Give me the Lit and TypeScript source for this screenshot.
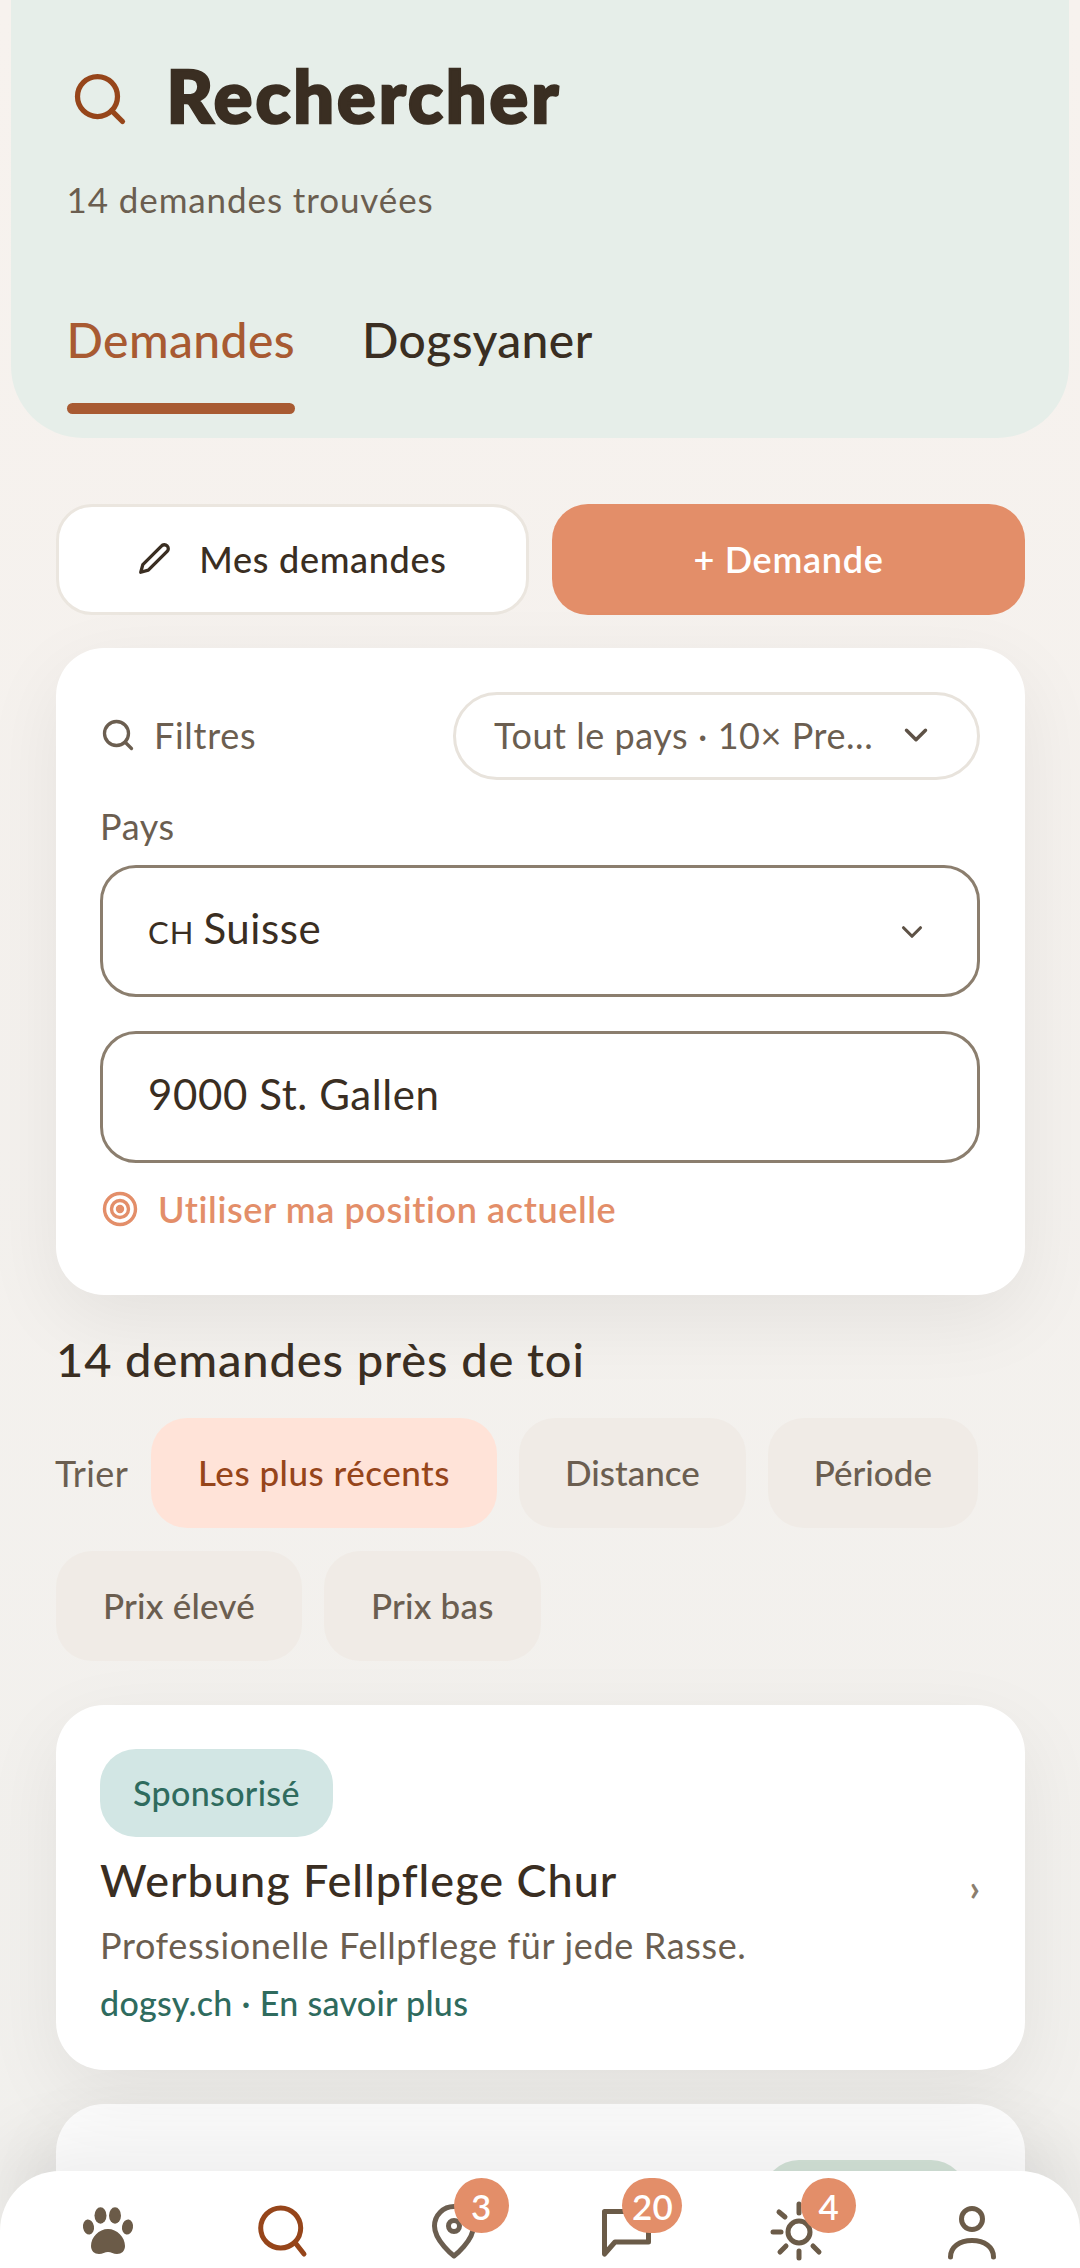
import { LitElement, html, css } from "lit";
import { customElement } from "lit/decorators.js";

const searchIcon = (size: number, color: string, sw = 2.1) => html`<svg width=${size} height=${size} viewBox="0 0 24 24" fill="none" stroke=${color} stroke-width=${sw} stroke-linecap="round" stroke-linejoin="round"><circle cx="11" cy="11" r="8"></circle><line x1="21" y1="21" x2="16.65" y2="16.65"></line></svg>`;
const chevron = (size: number, color: string) => html`<svg width=${size} height=${size} viewBox="0 0 24 24" fill="none" stroke=${color} stroke-width="2.2" stroke-linecap="round" stroke-linejoin="round"><path d="M6 9l6 6 6-6"></path></svg>`;

@customElement("app-root")
export class AppRoot extends LitElement {
  static styles = css`
    :host { display: block; position: relative; width: 1080px; height: 2268px; overflow: hidden; background: linear-gradient(#f7f2ee, #f1f0ed); font-family: "Lato", "Noto Sans", sans-serif; color: #3a2e22; }
    * { box-sizing: border-box; }
    .header { margin: 0 11px; height: 438px; background: #e6eee9; border-radius: 0 0 72px 72px; padding: 66px 56px 0 55.5px; display: flex; flex-direction: column; }
    .title-row { display: flex; align-items: center; gap: 37px; height: 66px; margin-left: 3px; }
    .title { font-size: 72px; font-weight: 900; line-height: 58px; padding-bottom: 8px; color: #3a2e22; letter-spacing: 3px; -webkit-text-stroke: 2.5px #3a2e22; }
    .sub { margin-top: 45px; font-size: 35px; line-height: 44px; color: #6b5e50; letter-spacing: 0.9px; }
    .tabs { margin-top: 89px; display: flex; gap: 67px; font-size: 48px; line-height: 60px; font-weight: 500; letter-spacing: 0.4px; }
    .tab { display: flex; flex-direction: column; }
    .tab.active { color: #a85a32; }
    .tab.active::after { content: ""; height: 11px; margin-top: 33px; border-radius: 6px; background: #a85a32; }
    .content { padding: 66px 55px 0 56px; display: flex; flex-direction: column; }
    .actions { display: grid; grid-template-columns: 1fr 1fr; gap: 23px; }
    .btn { height: 111px; padding-bottom: 2px; border-radius: 36px; display: flex; align-items: center; justify-content: center; font-size: 36px; font-weight: 500; letter-spacing: 0.7px; }
    .btn.ghost { background: #fff; border: 3px solid #ebe6df; gap: 28px; color: #3a2e22; }
    .btn.primary { background: #e38e69; color: #fff; font-weight: 600; }
    .card { background: #fff; border-radius: 48px; box-shadow: 0 24px 80px rgba(0, 0, 0, 0.065); }
    .filters { margin-top: 33px; height: 647px; padding: 44px 45px 0 44px; display: flex; flex-direction: column; }
    .f-top { display: flex; justify-content: space-between; align-items: center; height: 88px; }
    .f-label { display: flex; align-items: center; gap: 18px; font-size: 36px; color: #6b5e50; letter-spacing: 0.7px; padding-bottom: 2px; }
    .pill { width: 527px; height: 88px; border-radius: 44px; border: 3px solid #e8e3dc; display: flex; align-items: center; justify-content: space-between; padding: 0 42px 2px 38px; font-size: 36px; color: #6b5e50; letter-spacing: 0.55px; }
    .pays { margin-top: 24px; font-size: 36px; line-height: 44px; color: #6b5e50; letter-spacing: 0.6px; }
    .field { height: 132px; margin-top: 17px; border: 3px solid #8b7e6e; border-radius: 36px; padding: 0 48px 6px 45px; display: flex; align-items: center; justify-content: space-between; font-size: 42px; color: #3a2e22; letter-spacing: 0.6px; }
    .field + .field { margin-top: 34px; }
    .field svg { margin-top: 7px; }
    .cc { font-size: 31px; letter-spacing: 1px; margin-right: 9px; }
    .locate { margin-top: 24px; display: flex; align-items: center; gap: 20px; font-size: 36px; font-weight: 600; color: #e38e69; line-height: 44px; letter-spacing: 0.6px; padding-left: 2px; }
    .count { margin-top: 35px; font-size: 47px; line-height: 58px; font-weight: 500; color: #3a2e22; letter-spacing: 0.9px; }
    .sort { margin-top: 30px; display: flex; flex-wrap: wrap; align-items: center; gap: 23px 22px; }
    .sort-label { font-size: 36px; color: #6b5e50; width: 73px; letter-spacing: 0.4px; margin-left: -1px; margin-right: 1px; }
    .chip { height: 110px; padding: 0 47px 2px; border-radius: 36px; background: #f0ebe6; display: flex; align-items: center; font-size: 35px; font-weight: 500; color: #6b5e50; letter-spacing: 0.2px; }
    .chip.tight { padding: 0 46px 2px; letter-spacing: 0; }
    .chip.active { background: #ffe3d8; color: #96451a; letter-spacing: 0.5px; }
    .ad { margin-top: 44px; height: 365px; padding: 44px 45px 0 44px; position: relative; display: flex; flex-direction: column; }
    .tag { align-self: flex-start; height: 88px; padding: 0 33px 2px; border-radius: 36px; background: #d2e6e4; color: #2f6b5e; display: flex; align-items: center; font-size: 34px; font-weight: 500; letter-spacing: 0.35px; }
    .ad-row { display: flex; justify-content: space-between; align-items: flex-end; }
    .ad-title { margin-top: 14px; font-size: 45px; line-height: 58px; font-weight: 500; letter-spacing: 1px; }
    .arrow { font-size: 36px; color: #8b7e6e; line-height: 40px; font-weight: 700; margin-bottom: 2px; }
    .ad-desc { margin-top: 13px; font-size: 36px; line-height: 46px; color: #6b5e50; letter-spacing: 0.65px; }
    .ad-link { margin-top: 13px; font-size: 34px; line-height: 44px; font-weight: 500; color: #2f6b5e; letter-spacing: 0.3px; }
    .second { margin-top: 34px; height: 400px; padding: 56px 45px 0; display: flex; justify-content: flex-end; }
    .status { width: 204px; height: 88px; border-radius: 36px; background: #d5e5da; margin-right: 13px; }
    .nav { position: absolute; left: 0; right: 0; bottom: 0; height: 97px; background: #fff; border-radius: 60px 60px 0 0; box-shadow: 0 -30px 70px rgba(0, 0, 0, 0.07); display: flex; padding: 0 0 0 72px; gap: 100.8px; }
    .item { position: relative; width: 72px; height: 97px; flex: none; }
    .item svg { display: block; }
    .badge { position: absolute; top: 7px; height: 55px; min-width: 55px; border-radius: 28px; background: #e38e69; color: #fff; font-size: 35px; font-weight: 600; display: flex; align-items: center; justify-content: center; padding: 0 4px; }
    .b3 { left: 36px; }
    .b20 { left: 32px; min-width: 60px; }
    .b4 { left: 38px; }
  `;

  render() {
    return html`
      <div class="header">
        <div class="title-row">${searchIcon(60, "#96451a")}<span class="title">Rechercher</span></div>
        <div class="sub">14 demandes trouvées</div>
        <div class="tabs"><div class="tab active">Demandes</div><div class="tab">Dogsyaner</div></div>
      </div>
      <div class="content">
        <div class="actions">
          <div class="btn ghost">
            <svg width="33" height="33" viewBox="0 0 24 24" fill="none" stroke="#3a2e22" stroke-width="2.4" stroke-linecap="round" stroke-linejoin="round"><path d="M17 3a2.85 2.83 0 1 1 4 4L7.5 20.5 2 22l1.5-5.5Z"></path></svg>
            <span>Mes demandes</span>
          </div>
          <div class="btn primary">+ Demande</div>
        </div>
        <div class="card filters">
          <div class="f-top">
            <div class="f-label">${searchIcon(36, "#6b5e50", 2.2)}<span>Filtres</span></div>
            <div class="pill"><span>Tout le pays · 10× Pre...</span>${chevron(38, "#5e5246")}</div>
          </div>
          <div class="pays">Pays</div>
          <div class="field"><span><span class="cc">CH</span>Suisse</span>${chevron(34, "#5e5246")}</div>
          <div class="field"><span>9000 St. Gallen</span></div>
          <div class="locate">
            <svg width="36" height="36" viewBox="0 0 36 36" fill="none" stroke="#e38e69" stroke-width="3.4"><circle cx="18" cy="18" r="15.5"></circle><circle cx="18" cy="18" r="8.5"></circle><circle cx="18" cy="18" r="2.5" fill="#e38e69"></circle></svg>
            <span>Utiliser ma position actuelle</span>
          </div>
        </div>
        <div class="count">14 demandes près de toi</div>
        <div class="sort">
          <span class="sort-label">Trier</span>
          <div class="chip active">Les plus récents</div>
          <div class="chip tight">Distance</div>
          <div class="chip tight">Période</div>
          <div class="chip">Prix élevé</div>
          <div class="chip">Prix bas</div>
        </div>
        <div class="card ad">
          <div class="tag">Sponsorisé</div>
          <div class="ad-row"><div class="ad-title">Werbung Fellpflege Chur</div><span class="arrow">›</span></div>
          <div class="ad-desc">Professionelle Fellpflege für jede Rasse.</div>
          <div class="ad-link">dogsy.ch · En savoir plus</div>
        </div>
        <div class="card second"><div class="status"></div></div>
      </div>
      <div class="nav">
        <div class="item">
          <svg width="72" height="97" viewBox="0 0 72 97" fill="#6b5b48">
            <ellipse cx="16.5" cy="56" rx="5.500" ry="7.500" transform="rotate(-10 16.5 56)"></ellipse>
            <ellipse cx="28.5" cy="44.5" rx="6" ry="8.300"></ellipse>
            <ellipse cx="43" cy="44.5" rx="6" ry="8.300"></ellipse>
            <ellipse cx="55.5" cy="56" rx="5.500" ry="7.500" transform="rotate(10 55.5 56)"></ellipse>
            <path d="M36 58c-9 0-17 8-17 17 0 5 3.500 8 8 8 3.500 0 6-2 9-2s5.500 2 9 2c4.500 0 8-3 8-8 0-9-8-17-17-17Z"></path>
          </svg>
        </div>
        <div class="item">
          <svg width="72" height="97" viewBox="0 0 72 97" fill="none" stroke="#96451a" stroke-width="5" stroke-linecap="round"><circle cx="35.7" cy="57" r="20"></circle><line x1="50" y1="71.500" x2="59" y2="83"></line></svg>
        </div>
        <div class="item">
          <svg width="72" height="97" viewBox="0 0 72 97" fill="none" stroke="#6b5e50" stroke-width="5" stroke-linejoin="round"><path d="M36 85C36 85 16.500 70 16.500 55a19.500 19.500 0 0 1 39 0C55.500 70 36 85 36 85Z"></path><circle cx="36" cy="55" r="5.500"></circle></svg>
          <div class="badge b3">3</div>
        </div>
        <div class="item">
          <svg width="72" height="97" viewBox="0 0 72 97" fill="none" stroke="#6b5b48" stroke-width="5" stroke-linejoin="round" stroke-linecap="round"><path d="M14.500 40.500H58.500V71H25L14.500 83Z"></path></svg>
          <div class="badge b20">20</div>
        </div>
        <div class="item">
          <svg width="72" height="97" viewBox="0 0 72 97" fill="none" stroke="#6b5b48" stroke-width="5" stroke-linecap="round"><circle cx="36" cy="61" r="11"></circle><line x1="36" y1="33" x2="36" y2="42"></line><line x1="36" y1="80" x2="36" y2="87"></line><line x1="10" y1="61" x2="18" y2="61"></line><line x1="16" y1="41" x2="22" y2="46"></line><line x1="50" y1="75" x2="56" y2="81"></line><line x1="17" y1="81" x2="23" y2="75"></line></svg>
          <div class="badge b4">4</div>
        </div>
        <div class="item">
          <svg width="72" height="97" viewBox="0 0 72 97" fill="none" stroke="#6b5b48" stroke-width="5" stroke-linecap="round"><circle cx="36" cy="48" r="10.500"></circle><path d="M14.500 86c0-10 9-16.500 21.500-16.500s21.500 6.500 21.500 16.500"></path></svg>
        </div>
      </div>
    `;
  }
}
